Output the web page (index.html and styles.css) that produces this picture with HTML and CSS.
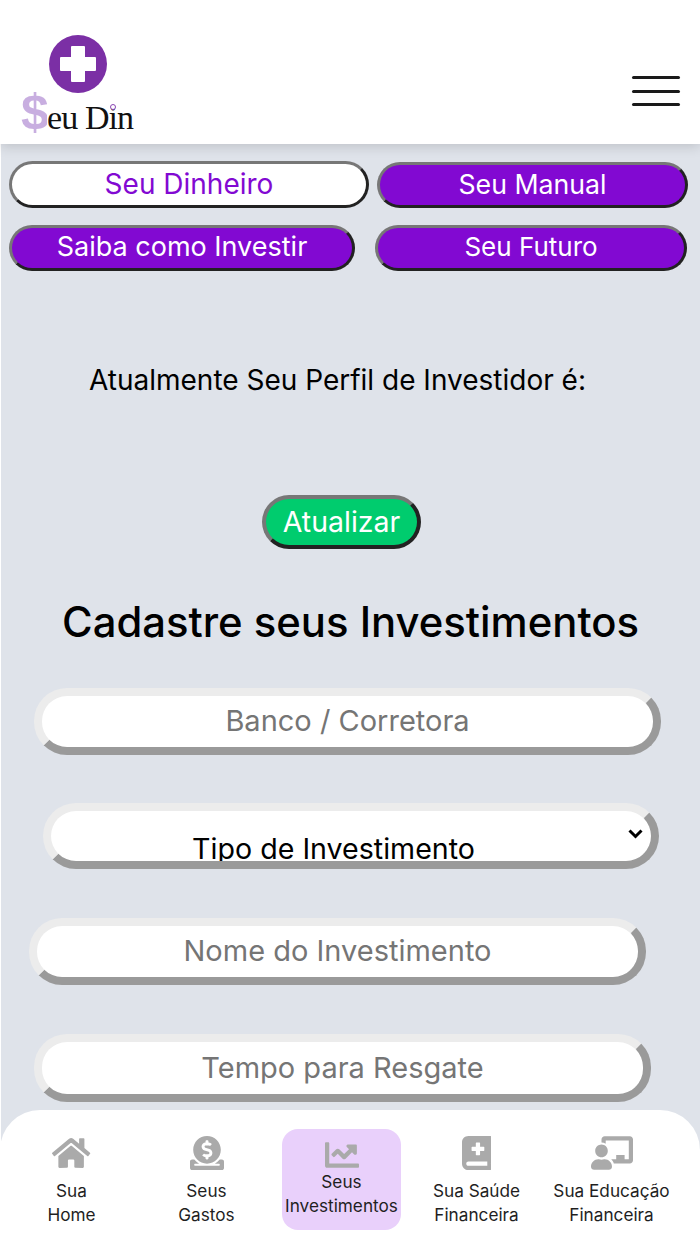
FILE: index.html
```html
<!DOCTYPE html>
<html lang="pt-BR">
<head>
<meta charset="utf-8">
<title>Seu Din</title>
<link rel="stylesheet" href="styles.css">
</head>
<body>
<header class="topbar">
  <div class="logo">
    <svg class="logo-mark" viewBox="0 0 58 58" aria-hidden="true">
      <circle cx="29" cy="29" r="29" fill="#7b2fa5"/>
      <path fill="#fff" d="M23 11h12a1 1 0 0 1 1 1v10h10a1 1 0 0 1 1 1v12a1 1 0 0 1-1 1H36v10a1 1 0 0 1-1 1H23a1 1 0 0 1-1-1V36H12a1 1 0 0 1-1-1V23a1 1 0 0 1 1-1h10V12a1 1 0 0 1 1-1z"/>
    </svg>
    <div class="logo-word"><span class="logo-dollar">$</span><span class="logo-name">eu Din</span><span class="logo-dot"></span></div>
  </div>
  <button class="burger" type="button" aria-label="Menu"><span></span><span></span><span></span></button>
</header>
<main class="content">
  <div class="tabs tabs-one">
    <button class="pill pill-light pill-dinheiro" type="button">Seu Dinheiro</button>
    <button class="pill pill-manual" type="button">Seu Manual</button>
  </div>
  <div class="tabs tabs-two">
    <button class="pill pill-saiba" type="button">Saiba como Investir</button>
    <button class="pill pill-futuro" type="button">Seu Futuro</button>
  </div>
  <p class="profile">Atualmente Seu Perfil de Investidor é:</p>
  <div class="refresh-row"><button class="refresh" type="button">Atualizar</button></div>
  <h1 class="title">Cadastre seus Investimentos</h1>
  <form class="form">
    <input class="field field-banco" type="text" placeholder="Banco / Corretora">
    <div class="field field-select">
      <span class="select-text">Tipo de Investimento</span>
      <svg class="chevron" viewBox="0 0 15 10" aria-hidden="true"><path d="M1.5 1.5l6 6 6-6" fill="none" stroke="#000" stroke-width="3"/></svg>
    </div>
    <input class="field field-nome" type="text" placeholder="Nome do Investimento">
    <input class="field field-tempo" type="text" placeholder="Tempo para Resgate">
  </form>
</main>
<nav class="dock">
  <a class="dock-item">
    <svg class="dock-icon" viewBox="0 0 576 512"><path d="M280.37 148.26L96 300.11V464a16 16 0 0 0 16 16l112.06-.29a16 16 0 0 0 15.92-16V368a16 16 0 0 1 16-16h64a16 16 0 0 1 16 16v95.64a16 16 0 0 0 16 16.05L464 480a16 16 0 0 0 16-16V300L295.67 148.26a12.19 12.19 0 0 0-15.3 0zM571.6 251.47L488 182.56V44.05a12 12 0 0 0-12-12h-56a12 12 0 0 0-12 12v72.61L318.47 43a48 48 0 0 0-61 0L4.34 251.47a12 12 0 0 0-1.6 16.9l25.5 31A12 12 0 0 0 45.15 301l235.22-193.74a12.19 12.19 0 0 1 15.3 0L530.9 301a12 12 0 0 0 16.9-1.6l25.5-31a12 12 0 0 0-1.7-16.93z"/></svg>
    <span class="dock-label">Sua<br>Home</span>
  </a>
  <a class="dock-item">
    <svg class="dock-icon" viewBox="0 0 512 512"><path d="M256 416c114.9 0 208-93.1 208-208S370.9 0 256 0 48 93.1 48 208s93.1 208 208 208zM233.8 97.4V80.6c0-9.2 7.4-16.6 16.6-16.6h11.1c9.2 0 16.6 7.4 16.6 16.6v17c15.5.8 30.5 6.1 43 15.4 5.6 4.1 6.2 12.3 1.2 17.1L306 145.6c-3.8 3.7-9.5 3.8-14 1-5.4-3.4-11.4-5.1-17.8-5.1h-38.9c-9 0-16.3 8.2-16.3 18.3 0 8.2 5 15.5 12.1 17.6l62.3 18.7c25.7 7.7 43.7 32.4 43.7 60.1 0 34-26.4 61.5-59.1 62.4v16.8c0 9.2-7.4 16.6-16.6 16.6h-11.1c-9.2 0-16.6-7.4-16.6-16.6v-17c-15.5-.8-30.5-6.1-43-15.4-5.6-4.1-6.2-12.3-1.2-17.1l16.3-15.5c3.8-3.7 9.5-3.8 14-1 5.4 3.4 11.4 5.1 17.8 5.1h38.9c9 0 16.3-8.2 16.3-18.3 0-8.2-5-15.5-12.1-17.6l-62.3-18.7c-25.7-7.7-43.7-32.4-43.7-60.1.1-34 26.4-61.5 59.1-62.4zM480 352h-32.5c-19.6 26-44.6 47.7-73 64h63.8c5.3 0 9.6 3.6 9.6 8v16c0 4.4-4.3 8-9.6 8H73.6c-5.3 0-9.6-3.6-9.6-8v-16c0-4.4 4.3-8 9.6-8h63.8c-28.4-16.3-53.3-38-73-64H32c-17.7 0-32 14.3-32 32v96c0 17.7 14.3 32 32 32h448c17.7 0 32-14.3 32-32v-96c0-17.7-14.3-32-32-32z"/></svg>
    <span class="dock-label">Seus<br>Gastos</span>
  </a>
  <a class="dock-item dock-item-active">
    <svg class="dock-icon" viewBox="0 0 512 512"><path d="M496 384H64V80c0-8.84-7.16-16-16-16H16C7.16 64 0 71.16 0 80v336c0 17.67 14.33 32 32 32h464c8.84 0 16-7.16 16-16v-32c0-8.84-7.16-16-16-16zM464 96H345.94c-21.38 0-32.09 25.85-16.97 40.97l32.4 32.4L288 242.75l-73.37-73.37c-12.5-12.5-32.76-12.5-45.25 0l-68.69 68.69c-6.25 6.25-6.25 16.38 0 22.63l22.62 22.62c6.25 6.25 16.38 6.25 22.63 0L192 237.25l73.37 73.37c12.5 12.5 32.76 12.5 45.25 0l96-96 32.4 32.4c15.12 15.12 40.97 4.41 40.97-16.97V112c0-8.84-7.16-16-16-16z"/></svg>
    <span class="dock-label">Seus<br>Investimentos</span>
  </a>
  <a class="dock-item">
    <svg class="dock-icon" viewBox="0 0 448 512"><path d="M448 358.4V25.6c0-16-9.6-25.6-25.6-25.6H96C41.6 0 0 41.6 0 96v320c0 54.4 41.6 96 96 96h326.4c12.8 0 25.6-9.6 25.6-25.6v-16q0-9.6-9.6-19.2c-3.2-16-3.2-60.8 0-73.6q9.6-4.8 9.6-19.2zM144 168a8 8 0 0 1 8-8h56v-56a8 8 0 0 1 8-8h48a8 8 0 0 1 8 8v56h56a8 8 0 0 1 8 8v48a8 8 0 0 1-8 8h-56v56a8 8 0 0 1-8 8h-48a8 8 0 0 1-8-8v-56h-56a8 8 0 0 1-8-8zm236.8 280H96c-19.2 0-32-12.8-32-32s16-32 32-32h284.8z"/></svg>
    <span class="dock-label">Sua Saúde<br>Financeira</span>
  </a>
  <a class="dock-item">
    <svg class="dock-icon" viewBox="0 0 640 512"><path d="M208 352c-2.39 0-4.78.35-7.06 1.09C187.98 357.3 174.35 360 160 360c-14.35 0-27.98-2.7-40.95-6.91-2.28-.74-4.66-1.09-7.05-1.09C49.94 352-.33 402.48 0 464.62.14 490.88 21.73 512 48 512h224c26.27 0 47.86-21.12 48-47.38.33-62.14-49.94-112.62-112-112.62zm-48-32c53.02 0 96-42.98 96-96s-42.98-96-96-96-96 42.98-96 96 42.98 96 96 96zM592 0H208c-26.47 0-48 22.25-48 49.59V96c23.42 0 45.1 6.78 64 17.8V64h352v288h-64v-64H384v64h-76.24c19.1 16.69 33.12 38.73 39.69 64H592c26.47 0 48-22.25 48-49.59V49.59C640 22.25 618.47 0 592 0z"/></svg>
    <span class="dock-label">Sua Educação<br>Financeira</span>
  </a>
</nav>
</body>
</html>
```
FILE: styles.css
```css
* { box-sizing: border-box; }
html, body { margin: 0; padding: 0; }
body {
  min-height: 100vh;
  background: #fff;
  font-family: Inter, "Noto Sans", sans-serif;
  overflow: hidden;
}
.topbar {
  height: 144px;
  background: #fff;
  box-shadow: 0 2px 12px rgba(0, 0, 0, .16);
  position: relative;
  z-index: 1;
  display: flex;
  justify-content: space-between;
  align-items: flex-start;
  padding: 35px 20px 0 21px;
}
.logo { width: 115px; display: flex; flex-direction: column; }
.logo-mark { width: 58px; height: 58px; margin-left: 28px; display: block; }
.logo-word { display: flex; align-items: baseline; height: 44px; margin-top: -3px; position: relative; }
.logo-dollar {
  font: 700 50px/44px "Liberation Sans", sans-serif;
  width: 26px;
  flex: none;
  color: transparent;
  background-color: #eadff3;
  background-image: radial-gradient(circle, #c8aee0 .8px, transparent 1px);
  background-size: 2px 2px;
  -webkit-background-clip: text;
  background-clip: text;
}
.logo-name { font: 400 34px/44px "Liberation Serif", serif; color: #111; white-space: nowrap; letter-spacing: -.9px; }
.logo-dot {
  position: absolute;
  left: 89px;
  top: 14px;
  width: 6px;
  height: 6px;
  border-radius: 50%;
  background: #fff;
  border: 1.5px solid #8a45b3;
}
.burger {
  width: 48px;
  height: 30px;
  margin-top: 41px;
  padding: 0;
  border: 0;
  background: none;
  display: flex;
  flex-direction: column;
  justify-content: space-between;
}
.burger span { display: block; height: 3px; border-radius: 2px; background: #1a1a1a; }
.content {
  margin-left: 1px;
  height: 1100px;
  background: #dfe3ea;
  padding-top: 17px;
}
.tabs { display: flex; }
.tabs-one { height: 47px; padding-left: 8px; }
.tabs-two { height: 46px; padding-left: 8px; margin-top: 17px; }
.pill {
  font-family: inherit;
  font-size: 27px;
  color: #fff;
  background: #8209d2;
  border: 3px solid;
  border-color: #777 #222 #222 #777;
  border-radius: 24px;
  padding: 0 0 2px;
  height: 46px;
  line-height: 38px;
}
.pill-light { background: #fff; color: #8209d2; height: 47px; font-size: 28px; }
.pill-dinheiro { width: 360px; }
.pill-manual { width: 311px; margin: 1px 0 0 8px; font-size: 26.7px; }
.pill-saiba { width: 346px; }
.pill-futuro { width: 312px; margin-left: 20px; font-size: 26px; }
.profile {
  margin: 92px 0 0 88px;
  font-size: 28px;
  line-height: 34px;
  color: #000;
}
.refresh-row { padding-left: 261px; margin-top: 98px; }
.refresh {
  display: block;
  width: 159px;
  height: 54px;
  font-family: inherit;
  font-size: 28.5px;
  color: #fff;
  background: #00cc6e;
  border: 4px solid;
  border-color: #777 #222 #222 #777;
  border-radius: 27px;
  padding: 0 0 2px;
}
.title {
  margin: 47px 0 0;
  text-align: center;
  font-size: 41.8px;
  line-height: 52px;
  font-weight: 500;
  color: #000;
}
.form { display: flex; flex-direction: column; align-items: flex-start; margin-top: 40px; }
.field {
  display: block;
  font-family: inherit;
  font-size: 29px;
  text-align: center;
  background: #fff;
  border: 8px solid;
  border-color: #ececec #9a9a9a #9a9a9a #ececec;
  border-radius: 33px;
  outline: 0;
  color: #000;
  padding: 0 0 2px;
}
.field::placeholder { color: #757575; opacity: 1; }
.field-banco { width: 627px; height: 67px; margin-left: 33px; }
.field-select {
  width: 616px;
  height: 66px;
  margin: 48px 0 0 42px;
  position: relative;
  overflow: hidden;
  padding: 21px 35px 0 0;
  font-size: 28.6px;
  line-height: 34px;
  white-space: nowrap;
}
.chevron { position: absolute; top: 18px; right: 8px; width: 15px; height: 10px; }
.field-nome { width: 617px; height: 67px; margin: 49px 0 0 28px; }
.field-tempo { width: 617px; height: 68px; margin: 49px 0 0 33px; }
.dock {
  position: fixed;
  left: 0;
  right: 0;
  bottom: 0;
  height: 134px;
  z-index: 2;
  background: #fff;
  border-radius: 40px 40px 0 0;
  display: grid;
  grid-template-columns: repeat(5, 135px);
  justify-content: start;
  padding: 0 4px;
}
.dock-item {
  display: flex;
  flex-direction: column;
  align-items: center;
  height: 101px;
  margin-top: 26px;
  color: #1f1f1f;
}
.dock-icon { height: 34px; width: auto; max-width: 42px; fill: #aaa; display: block; }
.dock-label { margin-top: 9px; font-size: 17.2px; line-height: 24px; text-align: center; white-space: nowrap; }
.dock-item-active {
  width: 119px;
  margin: 19px auto 0;
  padding-top: 9px;
  background: #e9d0fb;
  border-radius: 16px;
}
.dock-item-active .dock-label { margin-top: -2px; }
```
